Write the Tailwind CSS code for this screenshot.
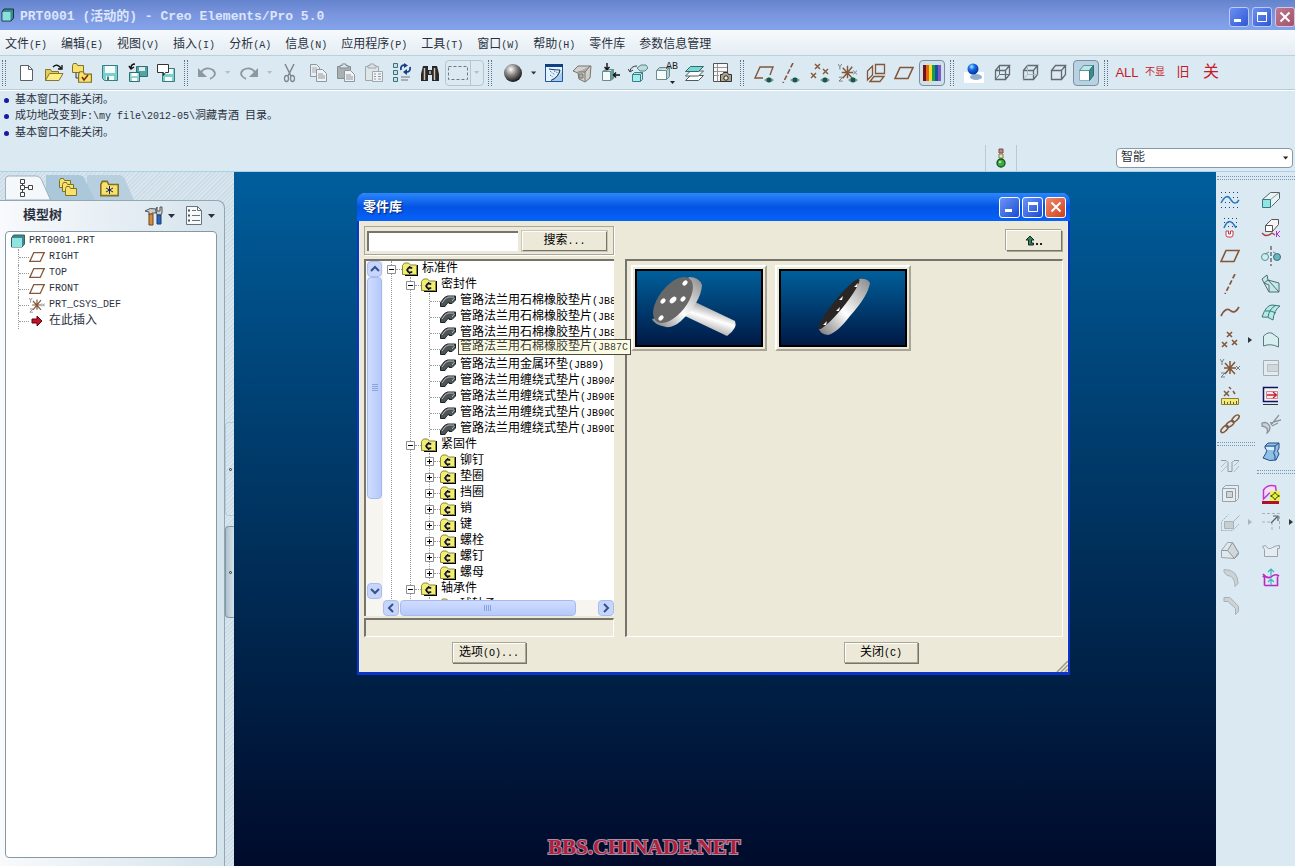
<!DOCTYPE html>
<html lang="zh-CN">
  <head>
    <meta charset="UTF-8" />
    <meta name="viewport" content="width=device-width, initial-scale=1.0" />
    <title>PRT0001 (活动的) - Creo Elements/Pro 5.0</title>
    <script src="https://cdn.jsdelivr.net/npm/@tailwindcss/browser@4"></script>
  </head>
  <body class="font-['Liberation_Mono','Noto_Sans_CJK_SC',monospace] text-xs">
    <!-- Shared icons -->
    <svg class="absolute h-0 w-0">
      <symbol id="caret" viewBox="0 0 8 4"><path d="M0 0h7L3.500 4z" fill="currentColor"></path></symbol>
      <symbol id="plane" viewBox="0 0 20 20"><path d="M6 4.500h13l-5 11H1z" fill="none" stroke="#83573a" stroke-width="1.600"></path></symbol>
      <symbol id="eye" viewBox="0 0 10 6"><path d="M0 3q5-5 10 0q-5 5-10 0z" fill="#7c9a92"></path><circle cx="5" cy="3" r="2.400" fill="#12594b"></circle></symbol>
      <symbol id="csys" viewBox="0 0 20 20">
        <path d="M4 10h12M10 3v13M5 5l10 11M15 4L5 16" fill="none" stroke="#83573a" stroke-width="1.500"></path>
        <path d="M0 1l2 3l2-3M2 4v3M16 8l4 4M20 8l-4 4M1 15h4l-4 4h4" fill="none" stroke="#777c85"></path>
      </symbol>
      <symbol id="folder" viewBox="0 0 16 14">
        <path d="M3 13.500h12.500V3" fill="none" stroke="#000" stroke-width="1.500"></path>
        <path d="M.500 12.500v-9l2-2.500h4l2 2h6v9.500z" fill="#f2ef70" stroke="#8a8738"></path>
        <path d="M10 6.500a2.500 2.500 0 1 0 0 3" fill="none" stroke="#10103a" stroke-width="1.800"></path>
        <path d="M7.500 4v2M7.500 10v2M4 8h2" stroke="#10103a"></path>
      </symbol>
      <symbol id="part" viewBox="0 0 16 14">
        <path d="M.500 8.500l4-5l3-1.500h8v4l-3.500 3.500H9V8L7 9.500l-2 3H.500z" fill="#4d5455" stroke="#1c2426"></path>
        <path d="M5 5l3-2h6M2 9l3-4M12 7l2.500-3" fill="none" stroke="#b4baba"></path>
      </symbol>
      <symbol id="cube" viewBox="0 0 20 20"><path d="M3.500 7.500h10v9h-10zM3.500 7.500l4-5h10l-4 5M17.500 2.500v9l-4 5" fill="none" stroke="#636b72" stroke-width="1.300"></path></symbol>
      <symbol id="minus" viewBox="0 0 9 9"><path d="M.500.500h8v8h-8z" fill="#fff" stroke="#8c9096"></path><path d="M2 4.500h5" stroke="#000"></path></symbol>
      <symbol id="plus" viewBox="0 0 9 9"><path d="M.500.500h8v8h-8z" fill="#fff" stroke="#8c9096"></path><path d="M2 4.500h5M4.500 2v5" stroke="#000"></path></symbol>
      <symbol id="yfolder" viewBox="0 0 12 10"><path d="M.500 9.500v-7l1-2h3l1 2h6v7z" fill="#f7e36b" stroke="#80702a"></path></symbol>
      <linearGradient id="sky" x1="0" y1="0" x2="0" y2="1"><stop stop-color="#00609c"></stop><stop offset="1" stop-color="#001844"></stop></linearGradient>
      <linearGradient id="steel" x1="0" y1="1" x2="1" y2="0"><stop stop-color="#777"></stop><stop offset=".45" stop-color="#fff"></stop><stop offset="1" stop-color="#888"></stop></linearGradient>
      <linearGradient id="shaft" x1=".7" y1=".2" x2=".4" y2=".85"><stop stop-color="#999"></stop><stop offset=".5" stop-color="#fff"></stop><stop offset="1" stop-color="#aaa"></stop></linearGradient>
      <radialGradient id="ball" cx=".38" cy=".3" r=".7"><stop stop-color="#fff"></stop><stop offset=".45" stop-color="#8b8987"></stop><stop offset="1" stop-color="#1b1918"></stop></radialGradient>
      <radialGradient id="blueball" cx=".38" cy=".3" r=".7"><stop stop-color="#bfe0ff"></stop><stop offset=".4" stop-color="#1270e8"></stop><stop offset="1" stop-color="#052fa0"></stop></radialGradient>
    </svg>

    <div class="flex min-h-screen flex-col bg-[#dbe9f2] text-[#2a3140]">
      <!-- Title bar -->
      <header class="flex h-[30px] shrink-0 items-center bg-linear-to-b from-[#6384cc] via-[#7b95df] to-[#82a4ea] pl-px">
        <svg class="h-3.5 w-3.5" viewBox="0 0 14 14"><path d="M1 4l2-3h9.500v9L10 13H1z" fill="#3c8c8e" stroke="#10383c"></path><path d="M1.500 4h8v8.500h-8z" fill="#8be0dd"></path></svg>
        <h1 class="ml-[5px] flex-1 truncate pt-1 text-[13px] font-bold text-[#dbe6fa]">PRT0001 (活动的) - Creo Elements/Pro 5.0</h1>
        <div class="flex gap-[3px] pt-[3px]">
          <button aria-label="最小化" class="flex h-5 w-5 items-center justify-center rounded-[3px] border border-[#b9ccf6] bg-linear-to-br from-[#6c8ff0] to-[#3057d4]"><svg class="h-3 w-3" viewBox="0 0 12 12"><path d="M1 8h7v3H1z" fill="#fff"></path></svg></button>
          <button aria-label="最大化" class="flex h-5 w-5 items-center justify-center rounded-[3px] border border-[#b9ccf6] bg-linear-to-br from-[#6c8ff0] to-[#3057d4]"><svg class="h-3 w-3" viewBox="0 0 12 12"><path d="M1.500 2v8.500h9V2z" fill="none" stroke="#fff"></path><path d="M1 1h10v3H1z" fill="#fff"></path></svg></button>
          <button aria-label="关闭窗口" class="flex h-5 w-5 items-center justify-center rounded-[3px] border border-[#d8c4dc] bg-linear-to-br from-[#bc7a95] to-[#a35268]"><svg class="h-3 w-3" viewBox="0 0 12 12"><path d="M1.500 1.500l9 9M10.500 1.500l-9 9" stroke="#fff" stroke-width="2"></path></svg></button>
        </div>
      </header>

      <!-- Menu bar -->
      <nav class="flex h-[26px] shrink-0 items-center gap-3.5 border-b border-[#bccfda] bg-linear-to-b from-[#f6fafd] to-[#e4edf3] pt-1 pl-[5px] whitespace-nowrap">
        <a href="#">文件<span class="text-[10px]">(F)</span></a>
        <a href="#">编辑<span class="text-[10px]">(E)</span></a>
        <a href="#">视图<span class="text-[10px]">(V)</span></a>
        <a href="#">插入<span class="text-[10px]">(I)</span></a>
        <a href="#">分析<span class="text-[10px]">(A)</span></a>
        <a href="#">信息<span class="text-[10px]">(N)</span></a>
        <a href="#">应用程序<span class="text-[10px]">(P)</span></a>
        <a href="#">工具<span class="text-[10px]">(T)</span></a>
        <a href="#">窗口<span class="text-[10px]">(W)</span></a>
        <a href="#">帮助<span class="text-[10px]">(H)</span></a>
        <a href="#">零件库</a>
        <a href="#">参数信息管理</a>
      </nav>

      <!-- Toolbar -->
      <div class="flex h-[34px] shrink-0 items-center overflow-hidden border-b border-[#b9cbd6] shadow-[0_1px_0_#fff]">
        <div class="flex w-3 shrink-0 pl-0.5"><span class="h-[26px] w-1 border-x border-dotted border-[#5a718c]"></span></div>
        <button aria-label="新建" class="flex h-7 w-7 shrink-0 items-center justify-center"><svg class="h-5 w-5" viewBox="0 0 20 20"><path d="M4.500 2.500h8l4 4v11h-12z" fill="#fff" stroke="#5c6064"></path><path d="M12.500 2.500v4h4" fill="none" stroke="#5c6064"></path></svg></button>
        <button aria-label="打开" class="flex h-7 w-7 shrink-0 items-center justify-center"><svg class="h-5 w-5" viewBox="0 0 20 20"><path d="M1.500 17.500v-11h5l1 2h7v3" fill="#e3cc55" stroke="#857531"></path><path d="M1.500 17.500l4-7H19l-4 7z" fill="#fbee86" stroke="#857531"></path><path d="M9 4q4-4 8 1M18 2v4h-4" fill="none" stroke="#111" stroke-width="1.300"></path></svg></button>
        <button aria-label="工作目录" class="flex h-7 w-7 shrink-0 items-center justify-center"><svg class="h-5 w-5" viewBox="0 0 20 20"><use href="#yfolder" x="0" y="0" width="12" height="10"></use><path d="M4 10v5h4" fill="none" stroke="#333"></path><use href="#yfolder" x="6" y="8" width="14" height="12"></use><path d="M10 14l2 3l4-5" fill="none" stroke="#7c2813" stroke-width="1.600"></path></svg></button>
        <button aria-label="保存" class="flex h-7 w-7 shrink-0 items-center justify-center"><svg class="h-5 w-5" viewBox="0 0 20 20"><path d="M2.500 2.500h15v15h-13l-2-2z" fill="#7ccfcd" stroke="#377d80"></path><path d="M5 3h10v7H5zM6 13h8v4H6z" fill="#f4fbfb"></path><path d="M7 13.500h2v4H7z" fill="#377d80"></path></svg></button>
        <button aria-label="保存副本" class="flex h-7 w-7 shrink-0 items-center justify-center"><svg class="h-5 w-5" viewBox="0 0 20 20"><path d="M8.500 3.500h11v10h-11z" fill="#53a3a4" stroke="#2f6f73"></path><path d="M11 4h6v4h-6z" fill="#d8eeee"></path><path d="M1.500 9.500h10v9h-10z" fill="#8fd5d2" stroke="#2f6f73"></path><path d="M3.500 10h6v3h-6zM4 15h5v3H4z" fill="#fff"></path><path d="M7 1Q3 1 3 5M1 3l2 3l3-2" fill="none" stroke="#111" stroke-width="1.500"></path></svg></button>
        <button aria-label="备份" class="flex h-7 w-7 shrink-0 items-center justify-center"><svg class="h-5 w-5" viewBox="0 0 20 20"><path d="M6.500 5.500h12v13h-12z" fill="#7ccfcd" stroke="#377d80"></path><path d="M9 6h8v5H9zM9 14h7v4H9z" fill="#f4fbfb"></path><path d="M1.500 1.500h11v8h-3l-2 3v-3h-6z" fill="#fff" stroke="#333"></path></svg></button>
        <div class="flex w-[13px] shrink-0 pl-1"><span class="h-[26px] w-1 border-x border-dotted border-[#5a718c]"></span></div>
        <button aria-label="撤消" class="flex h-7 w-7 shrink-0 items-center justify-center"><svg class="h-5 w-5" viewBox="0 0 20 20"><path d="M4 9q5-6 12-2q5 5-3 9" fill="none" stroke="#8f979d" stroke-width="1.800"></path><path d="M1 5v9h9z" fill="#8f979d"></path></svg></button>
        <button aria-label="撤消列表" class="flex h-7 w-3.5 shrink-0 items-center justify-center text-[#b4bfc7]"><svg class="h-[3px] w-1.5"><use href="#caret"></use></svg></button>
        <button aria-label="重做" class="flex h-7 w-7 shrink-0 items-center justify-center"><svg class="h-5 w-5" viewBox="0 0 20 20"><path d="M16 9q-5-6-12-2q-5 5 3 9" fill="none" stroke="#8f979d" stroke-width="1.800"></path><path d="M19 5v9h-9z" fill="#8f979d"></path></svg></button>
        <button aria-label="重做列表" class="flex h-7 w-[13px] shrink-0 items-center justify-center text-[#b4bfc7]"><svg class="h-[3px] w-1.5"><use href="#caret"></use></svg></button>
        <button aria-label="剪切" class="flex h-7 w-7 shrink-0 items-center justify-center"><svg class="h-5 w-5" viewBox="0 0 20 20"><path d="M5 1l6 12M14 1L8 13" fill="none" stroke="#7f878d" stroke-width="1.500"></path><ellipse cx="6.500" cy="15.500" rx="2" ry="3" fill="none" stroke="#7f878d" stroke-width="1.300"></ellipse><ellipse cx="12.500" cy="15.500" rx="2" ry="3" fill="none" stroke="#7f878d" stroke-width="1.300"></ellipse></svg></button>
        <button aria-label="复制" class="flex h-7 w-7 shrink-0 items-center justify-center"><svg class="h-5 w-5" viewBox="0 0 20 20"><path d="M2.500 1.500h6l3 3v9h-9z" fill="#e7edf0" stroke="#8f979d"></path><path d="M4 5h5M4 7h6M4 9h6" stroke="#a7aeb3"></path><path d="M8.500 6.500h6l4 4v8h-10z" fill="#eff3f5" stroke="#8f979d"></path><path d="M10 11h5M10 13h7M10 15h7" stroke="#8f979d"></path></svg></button>
        <button aria-label="粘贴" class="flex h-7 w-7 shrink-0 items-center justify-center"><svg class="h-5 w-5" viewBox="0 0 20 20"><path d="M1.500 3.500h13v12h-13z" fill="#a9b0b4" stroke="#858d93"></path><path d="M4 5V2.500h2V1h4v1.500h2V5z" fill="#dce2e5" stroke="#858d93"></path><path d="M8.500 7.500h6l4 4v7h-10z" fill="#eff3f5" stroke="#8f979d"></path><path d="M10 12h5M10 14h7M10 16h7" stroke="#8f979d"></path></svg></button>
        <button aria-label="选择性粘贴" class="flex h-7 w-7 shrink-0 items-center justify-center"><svg class="h-5 w-5" viewBox="0 0 20 20"><path d="M1.500 3.500h13v14h-13z" fill="#dfe6ea" stroke="#a0a8ae"></path><path d="M4 5V2.500h2V1h4v1.500h2V5z" fill="#dce2e5" stroke="#a0a8ae"></path><path d="M8.500 8.500h10v10h-10z" fill="#eff3f5" stroke="#a0a8ae"></path><path d="M10 11h2M14 11h3M10 13.500h2M14 13.500h3M10 16h2M14 16h3" stroke="#8f979d"></path></svg></button>
        <button aria-label="再生" class="flex h-7 w-7 shrink-0 items-center justify-center"><svg class="h-5 w-5" viewBox="0 0 20 20"><path d="M1.500.500h4v4h-4zM1.500 7.500h4v4h-4zM1.500 14.500h4v4h-4z" fill="#bfe4e6" stroke="#3f6e7c"></path><path d="M9 7q-1-5 4-5M18 4q1 5-4 5" fill="none" stroke="#183f80" stroke-width="1.800"></path><path d="M12 0l4 2.500L12 5zM15 6v6l-4-3z" fill="#183f80"></path><path d="M9 14h9M9 17h7" stroke="#6c747a"></path></svg></button>
        <button aria-label="查找" class="flex h-7 w-7 shrink-0 items-center justify-center"><svg class="h-5 w-5" viewBox="0 0 20 20"><path d="M3 3h5v4h4V3h5l2 8v7h-7v-6H8v6H1v-7z" fill="#2b2724"></path><path d="M4.500 5v12M14.500 5v12" stroke="#c9c0ba" stroke-width="1.500"></path><path d="M9 8h2v3H9z" fill="#999"></path></svg></button>
        <div class="ml-px flex h-[26px] w-[39px] shrink-0 rounded-sm border border-[#b7c5cf]">
          <button aria-label="框选" class="flex w-[26px] items-center justify-center border-r border-[#b7c5cf]"><svg class="h-4 w-5" viewBox="0 0 20 16"><path d="M.500 1.500h19v13H.500z" fill="none" stroke="#6f777d" stroke-dasharray="3 2"></path></svg></button>
          <button aria-label="框选列表" class="flex w-3 items-center justify-center text-[#b4bfc7]"><svg class="h-[3px] w-1.5"><use href="#caret"></use></svg></button>
        </div>
        <div class="flex w-[15px] shrink-0 pl-1"><span class="h-[26px] w-1 border-x border-dotted border-[#5a718c]"></span></div>
        <button aria-label="外观库" class="flex h-7 w-7 shrink-0 items-center justify-center"><svg class="h-5 w-5" viewBox="0 0 20 20"><circle cx="10" cy="10" r="9" fill="url(#ball)"></circle></svg></button>
        <button aria-label="外观列表" class="flex h-7 w-[13px] shrink-0 items-center justify-center text-[#333]"><svg class="h-1 w-1.5"><use href="#caret"></use></svg></button>
        <button aria-label="重画" class="flex h-7 w-7 shrink-0 items-center justify-center"><svg class="h-5 w-5" viewBox="0 0 20 20"><path d="M1.500 1.500h17v17h-17z" fill="#e4f3ff" stroke="#1f5598"></path><path d="M1 1h18v3H1z" fill="#103f84"></path><path d="M8 18q7-4 10-10v10z" fill="#a5cdef"></path><path d="M16 7Q15 14 7 17.500M5 6q5 1 11 1" fill="none" stroke="#1f3a62" stroke-width="1.200"></path><path d="M6 8l5 4M6 12l3 2M10 8l4 2" stroke="#2a65a8" stroke-dasharray="1 1"></path></svg></button>
        <button aria-label="视图方向" class="flex h-7 w-7 shrink-0 items-center justify-center"><svg class="h-5 w-5" viewBox="0 0 20 20"><path d="M1 8l5-5h13l-1 12-5 4-6-3-1-6z" fill="#d3d0cb" stroke="#77746f"></path><path d="M6 9h7l5-6M13 9v9M7 11h4v4H7z" fill="#b3b0ab" stroke="#77746f"></path></svg></button>
        <button aria-label="旋转中心" class="flex h-7 w-7 shrink-0 items-center justify-center"><svg class="h-5 w-5" viewBox="0 0 20 20"><path d="M2.500 8.500h8v9h-8z" fill="#f4fafa" stroke="#6b8b8d"></path><path d="M2.500 8.500l3-2h8l-3 2v9l3-2v-9" fill="#5aa59c" stroke="#6b8b8d"></path><path d="M7 0v6M4.500 4L7 6.500L9.500 4M20 12h-6M16 9.500L13.500 12l2.500 2.500" fill="none" stroke="#111" stroke-width="1.400"></path></svg></button>
        <button aria-label="重定向" class="flex h-7 w-7 shrink-0 items-center justify-center"><svg class="h-5 w-5" viewBox="0 0 20 20"><path d="M9 5l4-3h5l2 3-3 3h-5z" fill="#b9dddd" stroke="#5c8486"></path><path d="M4.500 11.500l2-2h8l-2 2v7h-8zM4.500 11.500h8M14.500 9.500v7l-2 2" fill="#a3edf0" stroke="#3c7f85"></path><path d="M9 3Q3 3 2 8M0 6l2 3l3-2" fill="none" stroke="#333"></path></svg></button>
        <button aria-label="已命名视图" class="flex h-7 w-7 shrink-0 items-center justify-center"><svg class="h-6 w-6" viewBox="0 0 24 24"><path d="M2.500 9.500h10v9h-10z" fill="#f6fbfc" stroke="#6b8b8d"></path><path d="M2.500 9.500l3-3h10l-3 3v9l3-3v-9" fill="#aad1d3" stroke="#6b8b8d"></path><path d="M16 20h5l-2.500 3z" fill="#222"></path><text x="12" y="8" font-size="10" fill="#222">AB</text></svg></button>
        <button aria-label="层" class="flex h-7 w-7 shrink-0 items-center justify-center"><svg class="h-5 w-5" viewBox="0 0 20 20"><path d="M1.500 17.500l5-5h13l-5 5z" fill="#fff" stroke="#4b5c60"></path><path d="M1.500 13l5-5h13l-5 5z" fill="#fff" stroke="#4b5c60"></path><path d="M1.500 8.500l5-5h13l-5 5z" fill="#78d8d3" stroke="#35686b"></path></svg></button>
        <button aria-label="视图管理器" class="flex h-7 w-7 shrink-0 items-center justify-center"><svg class="h-5 w-5" viewBox="0 0 20 20"><path d="M1.500.500h14v18h-14z" fill="#f8f8f8" stroke="#555"></path><path d="M5.500 1v17M2 4.500h13M2 8.500h13M2 12.500h5" stroke="#999"></path><path d="M8.500 11.500h2l1-2h4l1 2h3v7h-11z" fill="#aaa590" stroke="#333"></path><circle cx="14" cy="15" r="2.200" fill="#f0eedf" stroke="#222"></circle></svg></button>
        <div class="flex w-3.5 shrink-0 pl-1"><span class="h-[26px] w-1 border-x border-dotted border-[#5a718c]"></span></div>
        <button aria-label="平面显示" class="flex h-7 w-7 shrink-0 items-center justify-center"><svg class="h-5 w-5" viewBox="0 0 20 20"><path d="M9 15H1l5-11h13l-3 8" fill="none" stroke="#83573a" stroke-width="1.400"></path><use href="#eye" x="10" y="14" width="10" height="6"></use></svg></button>
        <button aria-label="轴显示" class="flex h-7 w-7 shrink-0 items-center justify-center"><svg class="h-5 w-5" viewBox="0 0 20 20"><path d="M11 0L1 20" fill="none" stroke="#83573a" stroke-width="1.600" stroke-dasharray="5 2"></path><use href="#eye" x="8" y="14" width="10" height="6"></use></svg></button>
        <button aria-label="点显示" class="flex h-7 w-7 shrink-0 items-center justify-center"><svg class="h-5 w-5" viewBox="0 0 20 20"><path d="M5 1l5 5M10 1L5 6M1 10l5 5M6 10l-5 5M13 6l5 5M18 6l-5 5" stroke="#83573a" stroke-width="1.400"></path><use href="#eye" x="10" y="14" width="10" height="6"></use></svg></button>
        <button aria-label="坐标系显示" class="flex h-7 w-7 shrink-0 items-center justify-center"><svg class="h-5 w-5" viewBox="0 0 20 20"><use href="#csys" width="19" height="19"></use><use href="#eye" x="10" y="14" width="10" height="6"></use></svg></button>
        <button aria-label="注释显示" class="flex h-7 w-7 shrink-0 items-center justify-center"><svg class="h-5 w-5" viewBox="0 0 20 20"><path d="M9.500 1.500h9v9h-9zM1.500 17V8l5-5v9zM4 18.500l4-5h10l-4 5z" fill="none" stroke="#83573a" stroke-width="1.300"></path></svg></button>
        <button aria-label="平面" class="flex h-7 w-7 shrink-0 items-center justify-center"><svg class="h-5 w-5"><use href="#plane"></use></svg></button>
        <button aria-label="颜色" class="mx-px flex h-[26px] w-[26px] shrink-0 items-center justify-center rounded-sm border border-[#7d8f9e] bg-[#d0e0eb]"><svg class="h-4 w-[18px]" viewBox="0 0 18 16"><path d="M0 0h3v16H0z" fill="#6d1512"></path><path d="M3 0h3v16H3z" fill="#e6621b"></path><path d="M6 0h3v16H6z" fill="#f6e21f"></path><path d="M9 0h3v16H9z" fill="#1d9c45"></path><path d="M12 0h3v16h-3z" fill="#174fa3"></path><path d="M15 0h3v16h-3z" fill="#7e57c8"></path></svg></button>
        <div class="flex w-3.5 shrink-0 pl-1"><span class="h-[26px] w-1 border-x border-dotted border-[#5a718c]"></span></div>
        <button aria-label="增强真实感" class="flex h-7 w-7 shrink-0 items-center justify-center"><svg class="h-5 w-5" viewBox="0 0 20 20"><path d="M0 9h20v11H0z" fill="#fff"></path><ellipse cx="12" cy="14" rx="6" ry="3" fill="#8fb0cc"></ellipse><circle cx="9" cy="6" r="5.500" fill="url(#blueball)"></circle></svg></button>
        <button aria-label="线框" class="flex h-7 w-7 shrink-0 items-center justify-center"><svg class="h-5 w-5" viewBox="0 0 20 20"><use href="#cube"></use><path d="M7.500 2.500v9h10M7.500 11.500l-4 5" fill="none" stroke="#636b72"></path></svg></button>
        <button aria-label="隐藏线" class="flex h-7 w-7 shrink-0 items-center justify-center"><svg class="h-5 w-5" viewBox="0 0 20 20"><use href="#cube"></use><path d="M7.500 2.500v9h10M7.500 11.500l-4 5" fill="none" stroke="#b0b8bd"></path></svg></button>
        <button aria-label="消隐" class="flex h-7 w-7 shrink-0 items-center justify-center"><svg class="h-5 w-5"><use href="#cube"></use></svg></button>
        <button aria-label="着色" class="mx-px flex h-[26px] w-[26px] shrink-0 items-center justify-center rounded-sm border border-[#7d8f9e] bg-[#b9d2e3]"><svg class="h-5 w-5" viewBox="0 0 20 20"><path d="M3.500 7.500h10v10h-10z" fill="#fff" stroke="#8eb3b8"></path><path d="M3.500 7.500l4-5h10l-4 5z" fill="#b8e8e9" stroke="#5c9599"></path><path d="M13.500 7.500l4-5v10l-4 5z" fill="#3d898b" stroke="#2c6f72"></path></svg></button>
        <div class="flex w-[13px] shrink-0 pl-1"><span class="h-[26px] w-1 border-x border-dotted border-[#5a718c]"></span></div>
        <button class="h-7 w-7 shrink-0 font-['Liberation_Sans',sans-serif] text-[13px] text-[#c61a28]">ALL</button>
        <button class="h-7 w-7 shrink-0 text-[10px] text-[#c61a28]">不显</button>
        <button class="h-7 w-7 shrink-0 text-[13px] text-[#c61a28]">旧</button>
        <button class="h-7 w-7 shrink-0 text-base text-[#c61a28]">关</button>
      </div>

      <!-- Messages and selection filter -->
      <div class="flex h-[82px] shrink-0 items-start justify-between border-b border-[#a8d2ea] pt-0.5">
        <ul class="pl-1 text-[11px] leading-4">
          <li class="flex items-center gap-1.5"><span class="h-[5px] w-[5px] rounded-full bg-[#1a1aa0]"></span>基本窗口不能关闭。</li>
          <li class="flex items-center gap-1.5"><span class="h-[5px] w-[5px] rounded-full bg-[#1a1aa0]"></span><span>成功地改变到<span class="text-[10px]">F:\my file\2012-05\</span>洞藏青酒<span class="text-[10px]">&nbsp;</span>目录。</span></li>
          <li class="flex items-center gap-1.5"><span class="h-[5px] w-[5px] rounded-full bg-[#1a1aa0]"></span>基本窗口不能关闭。</li>
        </ul>
        <div class="flex items-center self-end pr-0.5">
          <div class="mr-[99px] flex h-[26px] w-8 items-center justify-center border-x border-[#b8cad6]">
            <svg class="h-5 w-3" viewBox="0 0 12 20"><path d="M4 1h4v4H4z" fill="#b58a80" stroke="#7a4d45"></path><path d="M4 6h4v4H4z" fill="#dfe8bd" stroke="#80813d"></path><circle cx="6" cy="15" r="4" fill="#3cab45" stroke="#15521a" stroke-width="1.300"></circle><circle cx="5" cy="14" r="1.300" fill="#a9e5a6"></circle></svg>
          </div>
          <div class="relative">
            <select aria-label="选择过滤器" class="h-5 w-[177px] appearance-none rounded-sm border border-[#8698a5] bg-white pl-1 text-xs">
              <option>智能</option>
            </select>
            <svg class="pointer-events-none absolute top-2 right-1 h-1 w-1.5 text-[#222]"><use href="#caret"></use></svg>
          </div>
        </div>
      </div>

      <main class="flex flex-1">
        <!-- Model tree panel -->
        <aside class="flex w-[234px] shrink-0 flex-col bg-[repeating-linear-gradient(135deg,#dae7ef_0px,#dae7ef_1px,#cbdce7_2px,#cbdce7_3px)]">
          <div class="flex h-7 items-end">
            <svg class="h-[25px] w-[135px]" viewBox="0 0 135 25">
              <path d="M87 25V0h32q5 0 7 7l8 18z" fill="#b7cfde"></path><path d="M46 25V0h33q5 0 7 7l9 18z" fill="#abc8da"></path>
              <path d="M5.500 25V4q0-3 3-3h27q5 0 7 6l8 18z" fill="#f4f8fb" stroke="#9eb1bf"></path>
              <path d="M20.500 4.500h4v4h-4zM20.500 10.500h4v4h-4zM20.500 17.500h4v4h-4zM28.500 10.500h4v4h-4zM22.500 9v2M22.500 15v2M25 12.500h3" fill="#fff" stroke="#444"></path>
              <use href="#yfolder" x="59" y="3" width="12" height="10"></use><use href="#yfolder" x="62" y="7" width="12" height="10"></use><use href="#yfolder" x="65" y="11" width="12" height="10"></use>
              <use href="#yfolder" x="100" y="5" width="19" height="17"></use><path d="M109.500 11v8M106 13l7 4M113 13l-7 4" stroke="#1a2864"></path>
            </svg>
          </div>
          <div class="flex flex-1">
            <div class="flex flex-1 flex-col rounded-tr-lg border-t border-r border-[#93a6b4] bg-linear-to-r from-[#f8fafc] to-[#d5e3ec] pb-2 pl-[5px] pr-[7px]">
              <div class="flex h-[30px] items-center">
                <h2 class="ml-[18px] flex-1 text-[13px] font-bold">模型树</h2>
                <button aria-label="设置" class="flex items-center gap-1">
                  <svg class="h-5 w-5" viewBox="0 0 20 20"><path d="M1 5q5-4 11-2v4H8v2H5V6z" fill="#c9cdd1" stroke="#555"></path><path d="M5 8h4v11H5z" fill="#d88a3e" stroke="#6e4520"></path><path d="M13 1v4h3V1h2v6l-1 2h-4l-1-5z" fill="#c9cdd1" stroke="#555"></path><path d="M13 9h4v9h-4z" fill="#2c62b4" stroke="#173c74"></path></svg>
                  <svg class="h-1 w-2"><use href="#caret"></use></svg>
                </button>
                <button aria-label="显示" class="mr-px ml-2 flex items-center gap-1">
                  <svg class="h-5 w-5" viewBox="0 0 20 20"><path d="M2.500.500h11l4 4v14h-15z" fill="#f7f9fb" stroke="#67737c"></path><path d="M13.500.500v4h4M8 4.500h4M8 9.500h8M8 14.500h8" fill="none" stroke="#67737c"></path><path d="M4 3.500h2v2H4zM4 8.500h2v2H4zM4 13.500h2v2H4z" fill="#455"></path></svg>
                  <svg class="h-1 w-2"><use href="#caret"></use></svg>
                </button>
              </div>
              <div class="flex-1 rounded-sm border border-[#8598a6] bg-white pt-px pl-[5px] text-[10px] leading-4">
                <div class="flex items-center gap-1"><svg class="h-3.5 w-3.5" viewBox="0 0 14 14"><path d="M.500 4l2-3h11v9L11 13H.500z" fill="#43868b" stroke="#2f656a"></path><path d="M1 4h10v9H1z" fill="#90e4e1"></path></svg>PRT0001.PRT</div>
                <ul class="ml-[7px]">
                  <li class="flex items-center border-l border-dotted border-[#999]"><span class="w-2.5 border-t border-dotted border-[#999]"></span><svg class="mr-1 h-4 w-4"><use href="#plane"></use></svg>RIGHT</li>
                  <li class="flex items-center border-l border-dotted border-[#999]"><span class="w-2.5 border-t border-dotted border-[#999]"></span><svg class="mr-1 h-4 w-4"><use href="#plane"></use></svg>TOP</li>
                  <li class="flex items-center border-l border-dotted border-[#999]"><span class="w-2.5 border-t border-dotted border-[#999]"></span><svg class="mr-1 h-4 w-4"><use href="#plane"></use></svg>FRONT</li>
                  <li class="flex items-center border-l border-dotted border-[#999]"><span class="w-2.5 border-t border-dotted border-[#999]"></span><svg class="mr-1 h-4 w-4"><use href="#csys"></use></svg>PRT_CSYS_DEF</li>
                  <li class="flex items-center border-l border-dotted border-[#999] text-xs leading-4"><span class="w-2.5 border-t border-dotted border-[#999]"></span><svg class="mr-1 h-4 w-4" viewBox="0 0 16 16"><path d="M3 6h5V3l5 5l-5 5v-3H3z" fill="#c31425" stroke="#5d0711"></path></svg>在此插入</li>
                </ul>
              </div>
            </div>
            <div class="flex w-[9px] flex-col gap-2.5 pt-[222px]">
              <button aria-label="展开导航器" class="flex h-[94px] items-center justify-center rounded-l-sm border border-r-0 border-[#b7cad8]"><span class="h-[3px] w-[3px] rounded-full border border-[#333]"></span></button>
              <button aria-label="折叠导航器" class="flex h-[92px] items-center justify-center rounded-l-sm border border-r-0 border-[#8297a6] bg-linear-to-r from-[#b0c2cf] to-[#d3e1ea]"><span class="h-[3px] w-[3px] rounded-full border border-[#333]"></span></button>
            </div>
          </div>
        </aside>

        <!-- Graphics window -->
        <section class="relative flex-1 bg-linear-to-b from-[#005e9d] via-[#00335f] to-[#000b2b]">
          <div class="absolute top-[21px] left-[123px] flex w-[713px] flex-col rounded-t-lg border-x-2 border-b-[3px] border-[#0a35c8] bg-[#ece9d8] text-black">
            <div class="-mx-0.5 flex h-7 items-center rounded-t-lg bg-linear-to-b from-[#2c86fb] via-[#0453e4] to-[#0563fb] pr-1 pl-1.5">
              <h2 class="flex-1 pt-px text-[13px] font-bold text-white text-shadow-[1px_1px_1px_#0a246a]">零件库</h2>
              <div class="flex gap-0.5">
                <button aria-label="最小化对话框" class="flex h-[21px] w-[21px] items-center justify-center rounded-[3px] border border-white bg-linear-to-br from-[#6d95f5] to-[#1b48d4]"><svg class="h-3 w-3" viewBox="0 0 12 12"><path d="M1 8h7v3H1z" fill="#fff"></path></svg></button>
                <button aria-label="最大化对话框" class="flex h-[21px] w-[21px] items-center justify-center rounded-[3px] border border-white bg-linear-to-br from-[#6d95f5] to-[#1b48d4]"><svg class="h-3 w-3" viewBox="0 0 12 12"><path d="M1.500 2v8.500h9V2z" fill="none" stroke="#fff"></path><path d="M1 1h10v3H1z" fill="#fff"></path></svg></button>
                <button aria-label="关闭对话框" class="flex h-[21px] w-[21px] items-center justify-center rounded-[3px] border border-white bg-linear-to-br from-[#ee8a6c] to-[#cf3c14]"><svg class="h-3 w-3" viewBox="0 0 12 12"><path d="M1.500 1.500l9 9M10.500 1.500l-9 9" stroke="#fff" stroke-width="2"></path></svg></button>
              </div>
            </div>

            <div class="flex gap-[11px] border-x border-[#f2f0e6] px-1 pt-[5px] pb-[9px]">
              <div class="relative flex w-[250px] shrink-0 flex-col">
                <div class="flex h-[29px] items-center gap-1 border border-[#a9a698] px-0.5 shadow-[1px_1px_0_#fff]">
                  <input type="text" aria-label="搜索零件" class="h-5 min-w-0 flex-1 border-t-2 border-l-2 border-[#77756b] bg-white px-1 outline-none" />
                  <button class="mr-1 h-5 w-[85px] border border-t-white border-r-[#77756b] border-b-[#77756b] border-l-white shadow-[1px_1px_0_#a9a698] outline outline-[#c9c6b8]">搜索<span class="text-[10px]">...</span></button>
                </div>

                <div class="mt-1 flex h-[357px] border-t-2 border-l-2 border-[#77756b] bg-white">
                  <!-- Vertical scroll bar -->
                  <div class="flex w-[17px] shrink-0 flex-col bg-[#f6f5f0] px-px">
                    <button aria-label="向上滚动" class="flex h-4 items-center justify-center rounded-sm border border-[#a9bdf0] bg-[#c6d5fb]"><svg class="h-2 w-2.5" viewBox="0 0 10 8"><path d="M1 6l4-4l4 4" fill="none" stroke="#39518b" stroke-width="2"></path></svg></button>
                    <div class="flex h-[222px] items-center justify-center rounded-sm border border-[#a5bbef] bg-linear-to-r from-[#cfdcff] to-[#b5c9fa]"><svg class="h-2 w-1.5" viewBox="0 0 6 8"><path d="M0 .500h6M0 2.500h6M0 4.500h6M0 6.500h6" stroke="#8ba3dc"></path></svg></div>
                    <div class="flex-1"></div>
                    <button aria-label="向下滚动" class="mb-[17px] flex h-4 items-center justify-center rounded-sm border border-[#a9bdf0] bg-[#c6d5fb]"><svg class="h-2 w-2.5" viewBox="0 0 10 8"><path d="M1 2l4 4l4-4" fill="none" stroke="#39518b" stroke-width="2"></path></svg></button>
                  </div>
                  <div class="flex min-w-0 flex-1 flex-col">
                    <div class="h-[339px] overflow-hidden whitespace-nowrap">
                      <ul class="ml-2 border-l border-dotted border-[#999]">
                        <li>
                          <div class="flex h-4 items-center"><svg class="-ml-[5px] h-[9px] w-[9px]"><use href="#minus"></use></svg><span class="w-1.5 border-t border-dotted border-[#999]"></span><svg class="mr-1 h-3.5 w-4"><use href="#folder"></use></svg>标准件</div>
                          <ul class="ml-[18px] border-l border-dotted border-[#999]">
                            <li>
                              <div class="flex h-4 items-center"><svg class="-ml-[5px] h-[9px] w-[9px]"><use href="#minus"></use></svg><span class="w-1.5 border-t border-dotted border-[#999]"></span><svg class="mr-1 h-3.5 w-4"><use href="#folder"></use></svg>密封件</div>
                              <ul class="ml-[18px] border-l border-dotted border-[#999]">
                                <li class="flex h-4 items-center"><span class="w-2.5 shrink-0 border-t border-dotted border-[#999]"></span><svg class="mr-1 h-3.5 w-4 shrink-0"><use href="#part"></use></svg><span>管路法兰用石棉橡胶垫片<span class="text-[10px]">(JB87A)</span></span></li>
                                <li class="flex h-4 items-center"><span class="w-2.5 shrink-0 border-t border-dotted border-[#999]"></span><svg class="mr-1 h-3.5 w-4 shrink-0"><use href="#part"></use></svg><span>管路法兰用石棉橡胶垫片<span class="text-[10px]">(JB87B)</span></span></li>
                                <li class="flex h-4 items-center"><span class="w-2.5 shrink-0 border-t border-dotted border-[#999]"></span><svg class="mr-1 h-3.5 w-4 shrink-0"><use href="#part"></use></svg><span>管路法兰用石棉橡胶垫片<span class="text-[10px]">(JB87C)</span></span></li>
                                <li class="flex h-4 items-center"><span class="w-2.5 shrink-0 border-t border-dotted border-[#999]"></span><svg class="mr-1 h-3.5 w-4 shrink-0"><use href="#part"></use></svg></li>
                                <li class="flex h-4 items-center"><span class="w-2.5 shrink-0 border-t border-dotted border-[#999]"></span><svg class="mr-1 h-3.5 w-4 shrink-0"><use href="#part"></use></svg><span>管路法兰用金属环垫<span class="text-[10px]">(JB89)</span></span></li>
                                <li class="flex h-4 items-center"><span class="w-2.5 shrink-0 border-t border-dotted border-[#999]"></span><svg class="mr-1 h-3.5 w-4 shrink-0"><use href="#part"></use></svg><span>管路法兰用缠绕式垫片<span class="text-[10px]">(JB90A)</span></span></li>
                                <li class="flex h-4 items-center"><span class="w-2.5 shrink-0 border-t border-dotted border-[#999]"></span><svg class="mr-1 h-3.5 w-4 shrink-0"><use href="#part"></use></svg><span>管路法兰用缠绕式垫片<span class="text-[10px]">(JB90B)</span></span></li>
                                <li class="flex h-4 items-center"><span class="w-2.5 shrink-0 border-t border-dotted border-[#999]"></span><svg class="mr-1 h-3.5 w-4 shrink-0"><use href="#part"></use></svg><span>管路法兰用缠绕式垫片<span class="text-[10px]">(JB90C)</span></span></li>
                                <li class="flex h-4 items-center"><span class="w-2.5 shrink-0 border-t border-dotted border-[#999]"></span><svg class="mr-1 h-3.5 w-4 shrink-0"><use href="#part"></use></svg><span>管路法兰用缠绕式垫片<span class="text-[10px]">(JB90D)</span></span></li>
                              </ul>
                            </li>
                            <li>
                              <div class="flex h-4 items-center"><svg class="-ml-[5px] h-[9px] w-[9px]"><use href="#minus"></use></svg><span class="w-1.5 border-t border-dotted border-[#999]"></span><svg class="mr-1 h-3.5 w-4"><use href="#folder"></use></svg>紧固件</div>
                              <ul class="ml-[18px] border-l border-dotted border-[#999]">
                                <li class="flex h-4 items-center"><svg class="-ml-[5px] h-[9px] w-[9px]"><use href="#plus"></use></svg><span class="w-1.5 border-t border-dotted border-[#999]"></span><svg class="mr-1 h-3.5 w-4"><use href="#folder"></use></svg>铆钉</li>
                                <li class="flex h-4 items-center"><svg class="-ml-[5px] h-[9px] w-[9px]"><use href="#plus"></use></svg><span class="w-1.5 border-t border-dotted border-[#999]"></span><svg class="mr-1 h-3.5 w-4"><use href="#folder"></use></svg>垫圈</li>
                                <li class="flex h-4 items-center"><svg class="-ml-[5px] h-[9px] w-[9px]"><use href="#plus"></use></svg><span class="w-1.5 border-t border-dotted border-[#999]"></span><svg class="mr-1 h-3.5 w-4"><use href="#folder"></use></svg>挡圈</li>
                                <li class="flex h-4 items-center"><svg class="-ml-[5px] h-[9px] w-[9px]"><use href="#plus"></use></svg><span class="w-1.5 border-t border-dotted border-[#999]"></span><svg class="mr-1 h-3.5 w-4"><use href="#folder"></use></svg>销</li>
                                <li class="flex h-4 items-center"><svg class="-ml-[5px] h-[9px] w-[9px]"><use href="#plus"></use></svg><span class="w-1.5 border-t border-dotted border-[#999]"></span><svg class="mr-1 h-3.5 w-4"><use href="#folder"></use></svg>键</li>
                                <li class="flex h-4 items-center"><svg class="-ml-[5px] h-[9px] w-[9px]"><use href="#plus"></use></svg><span class="w-1.5 border-t border-dotted border-[#999]"></span><svg class="mr-1 h-3.5 w-4"><use href="#folder"></use></svg>螺栓</li>
                                <li class="flex h-4 items-center"><svg class="-ml-[5px] h-[9px] w-[9px]"><use href="#plus"></use></svg><span class="w-1.5 border-t border-dotted border-[#999]"></span><svg class="mr-1 h-3.5 w-4"><use href="#folder"></use></svg>螺钉</li>
                                <li class="flex h-4 items-center"><svg class="-ml-[5px] h-[9px] w-[9px]"><use href="#plus"></use></svg><span class="w-1.5 border-t border-dotted border-[#999]"></span><svg class="mr-1 h-3.5 w-4"><use href="#folder"></use></svg>螺母</li>
                              </ul>
                            </li>
                            <li>
                              <div class="flex h-4 items-center"><svg class="-ml-[5px] h-[9px] w-[9px]"><use href="#minus"></use></svg><span class="w-1.5 border-t border-dotted border-[#999]"></span><svg class="mr-1 h-3.5 w-4"><use href="#folder"></use></svg>轴承件</div>
                              <ul class="ml-[18px] border-l border-dotted border-[#999]">
                                <li class="flex h-4 items-center"><span class="w-2.5 border-t border-dotted border-[#999]"></span><svg class="mr-1 h-3.5 w-4"><use href="#folder"></use></svg>球轴承</li>
                              </ul>
                            </li>
                          </ul>
                        </li>
                      </ul>
                    </div>
                    <!-- Horizontal scroll bar -->
                    <div class="flex h-4 bg-[#f6f5f0]">
                      <button aria-label="向左滚动" class="flex w-4 items-center justify-center rounded-sm border border-[#a9bdf0] bg-[#c6d5fb]"><svg class="h-2.5 w-2" viewBox="0 0 8 10"><path d="M6 1L2 5l4 4" fill="none" stroke="#39518b" stroke-width="2"></path></svg></button>
                      <div class="ml-px flex w-[176px] items-center justify-center rounded-sm border border-[#a5bbef] bg-linear-to-b from-[#cfdcff] to-[#b5c9fa]"><svg class="h-1.5 w-2" viewBox="0 0 8 6"><path d="M.500 0v6M2.500 0v6M4.500 0v6M6.500 0v6" stroke="#8ba3dc"></path></svg></div>
                      <div class="flex-1"></div>
                      <button aria-label="向右滚动" class="flex w-4 items-center justify-center rounded-sm border border-[#a9bdf0] bg-[#c6d5fb]"><svg class="h-2.5 w-2" viewBox="0 0 8 10"><path d="M2 1l4 4l-4 4" fill="none" stroke="#39518b" stroke-width="2"></path></svg></button>
                    </div>
                  </div>
                </div>

                <div class="mt-0.5 h-[19px] border-t-2 border-r border-b border-l-2 border-t-[#77756b] border-r-white border-b-white border-l-[#77756b]"></div>
                <button class="mt-[5px] h-[21px] w-[74px] self-center border border-[#a9a698] bg-[#ece9d8] shadow-[inset_1px_1px_0_#fff,1px_1px_0_#77756b]">选项<span class="text-[10px]">(O)...</span></button>

                <div role="tooltip" class="absolute top-[113px] left-[94px] h-4 border border-black/70 bg-[#fbfbe4] pr-0.5 pl-px leading-[14px] whitespace-nowrap text-black/80">管路法兰用石棉橡胶垫片<span class="text-[10px]">(JB87C</span></div>
              </div>

              <div class="flex min-w-0 flex-1 flex-col">
                <button aria-label="上一级" class="mt-1 mr-px flex h-[21px] w-14 items-center justify-center self-end border border-t-white border-r-[#77756b] border-b-[#77756b] border-l-white shadow-[1px_1px_0_#a9a698,-1px_-1px_0_#a9a698]"><svg class="h-3 w-[18px]" viewBox="0 0 18 12"><path d="M5 1L1 5h2.500v5h5V8H6.500V5H9z" fill="#397d5f" stroke="#0f2e20"></path><path d="M11 8h2v2h-2zM15 8h2v2h-2z" fill="#222"></path></svg></button>
                <div class="mt-2 flex flex-1 items-start gap-2 border-t-2 border-r border-b border-l-2 border-t-[#77756b] border-r-white border-b-white border-l-[#77756b] pt-1 pl-1">
                  <button aria-label="法兰零件" class="border-2 border-t-white border-r-[#a9a698] border-b-[#a9a698] border-l-white p-0.5">
                    <svg class="h-[78px] w-[128px]" viewBox="0 0 128 78">
                      <path d="M1 1h126v76H1z" fill="url(#sky)" stroke="#000" stroke-width="2"></path>
                      <path d="M58 32L100 52q3 7-8 15L50 47z" fill="url(#shaft)"></path>
                      <path d="M54 8q10 0 13 8q-1 17-21 36q-8 7-15 6q-13-3-14-8l8-2z" fill="url(#steel)"></path>
                      <ellipse cx="38" cy="31" rx="14" ry="27" transform="rotate(38 38 31)" fill="#686868"></ellipse>
                      <g fill="#fff"><ellipse cx="50" cy="14" rx="2" ry="3" transform="rotate(45 50 14)"></ellipse><ellipse cx="38" cy="31" rx="2.500" ry="4" transform="rotate(45 38 31)"></ellipse><ellipse cx="28" cy="32" rx="2" ry="3" transform="rotate(45 28 32)"></ellipse><ellipse cx="48" cy="30" rx="2" ry="3" transform="rotate(45 48 30)"></ellipse><ellipse cx="26" cy="49" rx="2" ry="3" transform="rotate(45 26 49)"></ellipse></g>
                    </svg>
                  </button>
                  <button aria-label="垫片零件" class="border-2 border-t-white border-r-[#a9a698] border-b-[#a9a698] border-l-white p-0.5">
                    <svg class="h-[78px] w-[128px]" viewBox="0 0 128 78">
                      <path d="M1 1h126v76H1z" fill="url(#sky)" stroke="#000" stroke-width="2"></path>
                      <path d="M80 10q8-1 11 4q-2 13-20 33Q58 64 49 66q-8-1-9-6l12-14z" fill="url(#steel)"></path>
                      <ellipse cx="60" cy="35" rx="5" ry="32" transform="rotate(39 60 35)" fill="#292625"></ellipse>
                      <g fill="#fff"><path d="M75 18l4-4l-1 4zM60 31l4-4l-1 4zM57 42l4-4l-1 4zM44 56l4-4l-1 4z"></path></g>
                    </svg>
                  </button>
                </div>
                <button class="mt-[5px] mr-[145px] h-[21px] w-[74px] self-end border border-[#a9a698] bg-[#ece9d8] shadow-[inset_1px_1px_0_#fff,1px_1px_0_#77756b]">关闭<span class="text-[10px]">(C)</span></button>
              </div>
            </div>
            <svg class="absolute right-0 bottom-0 h-3 w-3" viewBox="0 0 12 12"><path d="M1 12L12 1M5 12l7-7M9 12l3-3" stroke="#9c998b" stroke-width="1.500"></path></svg>
          </div>

          <p class="absolute bottom-[3px] left-[314px] font-['Liberation_Serif',serif] text-[21px] leading-8 font-bold text-[#b0203a] [-webkit-text-stroke:2px_#a88fa8] [paint-order:stroke_fill]">BBS.CHINADE.NET</p>
        </section>

        <!-- Feature toolbars -->
        <aside class="w-[79px] shrink-0">
          <div class="flex h-3.5 items-start pt-1 pl-px"><span class="h-1 w-full border-y border-dotted border-[#7896b4]"></span></div>
          <div class="flex items-start">
            <div class="flex w-[41px] flex-col">
              <button aria-label="草绘" class="flex h-7 w-7 items-center justify-center"><svg class="h-5 w-5" viewBox="0 0 20 20"><path d="M1 2.500h18M1 7.500h18M1 12.500h18M1 17.500h18" stroke="#1c3f78" stroke-dasharray="1 3"></path><path d="M1 13q6-11 10-3q4 6 8 0" fill="none" stroke="#2a79bd" stroke-width="1.500"></path></svg></button>
              <button aria-label="修饰草绘" class="flex h-7 w-7 items-center justify-center"><svg class="h-5 w-5" viewBox="0 0 20 20"><path d="M4 .500h14M4 4.500h14M4 8.500h14" stroke="#1c3f78" stroke-dasharray="1 3"></path><path d="M4 10q5-13 12 0" fill="none" stroke="#2a79bd" stroke-width="1.500"></path><path d="M6 13v4q0 2 2 2h3q2 0 2-2v-4h-2.500v3h-2v-3z" fill="#fff" stroke="#c43b4b"></path></svg></button>
              <button aria-label="基准平面" class="flex h-7 w-7 items-center justify-center"><svg class="h-5 w-5"><use href="#plane"></use></svg></button>
              <button aria-label="基准轴" class="flex h-7 w-7 items-center justify-center"><svg class="h-5 w-5" viewBox="0 0 20 20"><path d="M15 0L5 20" fill="none" stroke="#83573a" stroke-width="1.700" stroke-dasharray="5 2"></path></svg></button>
              <button aria-label="基准曲线" class="flex h-7 w-7 items-center justify-center"><svg class="h-5 w-5" viewBox="0 0 20 20"><path d="M1 14Q6 4 11 9q4 3 8-4" fill="none" stroke="#83573a" stroke-width="1.700"></path></svg></button>
              <div class="flex h-7 items-center">
                <button aria-label="基准点" class="flex h-7 w-7 items-center justify-center"><svg class="h-5 w-5" viewBox="0 0 20 20"><path d="M7 2l5 5M12 2L7 7M2 12l5 5M7 12l-5 5M12 10l5 5M17 10l-5 5" stroke="#83573a" stroke-width="1.600"></path></svg></button>
                <svg class="ml-1 h-1.5 w-1" viewBox="0 0 4 6"><path d="M0 0v6l4-3z" fill="#333"></path></svg>
              </div>
              <button aria-label="坐标系" class="flex h-7 w-7 items-center justify-center"><svg class="h-5 w-5"><use href="#csys"></use></svg></button>
              <button aria-label="分析特征" class="flex h-7 w-7 items-center justify-center"><svg class="h-5 w-5" viewBox="0 0 20 20"><path d="M4 5l5 5M9 5l-5 5M9 1l2 2M13 5l2 3" stroke="#83573a" stroke-width="1.500"></path><path d="M1.500 12.500h17v6h-17z" fill="#f5ea79" stroke="#8d8032"></path><path d="M4.500 15v3M7.500 16v2M10.500 15v3M13.500 16v2M16.500 15v3" stroke="#6b6020"></path></svg></button>
              <button aria-label="参考" class="flex h-7 w-7 items-center justify-center"><svg class="h-5 w-5" viewBox="0 0 20 20"><g fill="none" stroke="#83573a" stroke-width="1.600"><ellipse cx="4.500" cy="15" rx="2.200" ry="4.500" transform="rotate(45 4.500 15)"></ellipse><ellipse cx="10" cy="10" rx="2.200" ry="4.500" transform="rotate(55 10 10)"></ellipse><ellipse cx="15.500" cy="4.500" rx="2.200" ry="4.500" transform="rotate(45 15.500 4.500)"></ellipse></g></svg></button>
              <div class="flex h-3.5 items-start pt-1 pl-px"><span class="h-1 w-[38px] border-y border-dotted border-[#7896b4]"></span></div>
              <button aria-label="孔" class="flex h-7 w-7 items-center justify-center"><svg class="h-5 w-5" viewBox="0 0 20 20"><path d="M1 4.500h5l2 2v9h4v-9l2-2h5" fill="none" stroke="#8f999f"></path><path d="M1 11l5-5M1 16l6-6M14 16l5-6M14 10l5-5" stroke="#b4bdc3"></path></svg></button>
              <button aria-label="壳" class="flex h-7 w-7 items-center justify-center"><svg class="h-5 w-5" viewBox="0 0 20 20"><path d="M2.500 4.500h13v13h-13zM2.500 4.500l3-3h13v13l-3 3" fill="#e6ecef" stroke="#99a3aa"></path><path d="M6.500 7.500h6v6h-6z" fill="#cfd6da" stroke="#8d979e"></path></svg></button>
              <div class="flex h-7 items-center">
                <button aria-label="筋" class="flex h-7 w-7 items-center justify-center"><svg class="h-5 w-5" viewBox="0 0 20 20"><path d="M1.500 9.500l7-7M1.500 18.500v-9M1.500 18.500h11l7-7" fill="none" stroke="#a7b1b8" stroke-dasharray="2 1"></path><path d="M4.500 9.500h9v7h-9zM13.500 9.500l6-6" fill="#c7ced2" stroke="#a7b1b8"></path></svg></button>
                <svg class="ml-1 h-1.5 w-1" viewBox="0 0 4 6"><path d="M0 0v6l4-3z" fill="#a9b4bc"></path></svg>
              </div>
              <button aria-label="拔模" class="flex h-7 w-7 items-center justify-center"><svg class="h-5 w-5" viewBox="0 0 20 20"><path d="M1.500 17.500v-7l6-8h5l6 10v2l-4 4z" fill="#e1e7ea" stroke="#99a3aa"></path><path d="M7.500 10.500l5-8l6 10l-4 6zM1.500 10.500h6" fill="#d0d8dc" stroke="#8d979e"></path></svg></button>
              <button aria-label="倒圆角" class="flex h-7 w-7 items-center justify-center"><svg class="h-5 w-5" viewBox="0 0 20 20"><path d="M4 1.500q14 0 14 14l-3 3q0-11-8-11L4 4z" fill="#ccd3d7" stroke="#a7b1b8"></path></svg></button>
              <button aria-label="倒角" class="flex h-7 w-7 items-center justify-center"><svg class="h-5 w-5" viewBox="0 0 20 20"><path d="M4 1.500h6l8.500 9v5l-3 3v-6L8 5.500H4z" fill="#ccd3d7" stroke="#a7b1b8"></path></svg></button>
            </div>
            <div class="flex flex-1 flex-col">
              <button aria-label="拉伸" class="flex h-7 w-7 items-center justify-center"><svg class="h-5 w-5" viewBox="0 0 20 20"><path d="M1.500 9.500l8-7h9v6l-8 8" fill="#e9f3f5" stroke="#566"></path><path d="M9.500 9.500l9-7" stroke="#8a9a9c"></path><path d="M1.500 9.500h8v8h-8z" fill="#8fe5e3" stroke="#37797c"></path></svg></button>
              <button aria-label="旋转" class="flex h-7 w-7 items-center justify-center"><svg class="h-5 w-5" viewBox="0 0 20 20"><path d="M4.500 7.500l6-6h7v5l-6 7z" fill="#f5f5f5" stroke="#555"></path><path d="M4.500 7.500h7v6h-7z" fill="#fff" stroke="#555"></path><path d="M1 15q4 5 10 0l3 2" fill="none" stroke="#b04141" stroke-width="1.400"></path><path d="M15.500 13v6M19 13l-3 3l3 3" fill="none" stroke="#b52dc2"></path></svg></button>
              <button aria-label="镜像" class="flex h-7 w-7 items-center justify-center"><svg class="h-5 w-5" viewBox="0 0 20 20"><path d="M10 0v20" stroke="#333" stroke-dasharray="4 2"></path><circle cx="4" cy="11" r="3.500" fill="#c9f0f1" stroke="#5e8f97"></circle><circle cx="16" cy="11" r="3.500" fill="#66b8bd" stroke="#37707a"></circle><path d="M4 8l4-2M16 8l-4-2" stroke="#5e8f97"></path></svg></button>
              <button aria-label="扫描混合" class="flex h-7 w-7 items-center justify-center"><svg class="h-5 w-5" viewBox="0 0 20 20"><path d="M1 5l5-4l1 5l11 3v9H8V11L3 9z" fill="#c4e8e8" stroke="#4c6e70"></path><path d="M7 6L3 9l5 9M7 6l11 12" fill="none" stroke="#4c6e70"></path></svg></button>
              <button aria-label="边界混合" class="flex h-7 w-7 items-center justify-center"><svg class="h-5 w-5" viewBox="0 0 20 20"><path d="M1 15Q5 3 11 3l8 1q-6 4-7 14q-5-4-11-3zM4 9q6-1 11 2M7 15q1-8 8-12" fill="#b2eaea" stroke="#447578"></path></svg></button>
              <button aria-label="填充" class="flex h-7 w-7 items-center justify-center"><svg class="h-5 w-5" viewBox="0 0 20 20"><path d="M2.500 16V6q6-6 11-1l4 3v9q-8-4-15-1z" fill="#d9eeee" stroke="#587b7c"></path></svg></button>
              <button aria-label="合并" class="flex h-7 w-7 items-center justify-center"><svg class="h-5 w-5" viewBox="0 0 20 20"><path d="M2.500 2.500h15v15h-15z" fill="#e4eaed" stroke="#a4adb3"></path><path d="M17 6.500H6.500v7H17" fill="#d0d8dc" stroke="#b8c0c5"></path></svg></button>
              <button aria-label="延伸" class="flex h-7 w-7 items-center justify-center"><svg class="h-5 w-5" viewBox="0 0 20 20"><path d="M17 1.500H2.500v14H17" fill="#eef4f6" stroke="#10105c" stroke-width="1.500"></path><path d="M2 18.500h15" stroke="#333"></path><path d="M5.500 5.500h11v7h-11z" fill="#fbe9ec" stroke="#d8828d"></path><path d="M6 9h9M12 6l3.500 3l-3.500 3" fill="none" stroke="#bd2334" stroke-width="1.300"></path></svg></button>
              <button aria-label="修剪" class="flex h-7 w-7 items-center justify-center"><svg class="h-5 w-5" viewBox="0 0 20 20"><path d="M1 9q6-2 8 4q0 4-3 6q2-6-5-7zM10 11l8-10M9 9l11-3M11 12l6-3" fill="#ccd2d6" stroke="#8c969d" stroke-width="1.300"></path></svg></button>
              <button aria-label="样式" class="flex h-7 w-7 items-center justify-center"><svg class="h-5 w-5" viewBox="0 0 20 20"><path d="M4 4l3-3h11v5q-3 3 0 6l-3 6q-6 2-13-2l3-5q2-3-1-5z" fill="#8fc0e8" stroke="#234d87"></path><path d="M4 4h10l4-3M14 4v4q-3 3 0 6v4" fill="none" stroke="#234d87"></path><path d="M5 5h8v3H6z" fill="#d9ecfb"></path></svg></button>
              <div class="flex h-3.5 items-start pt-1"><span class="h-1 w-full border-y border-dotted border-[#7896b4]"></span></div>
              <button aria-label="造型" class="flex h-7 w-7 items-center justify-center"><svg class="h-5 w-5" viewBox="0 0 20 20"><path d="M2.500 15V6q4-6 12-4l1 8q-7-3-9 1z" fill="#f7ddfa" stroke="#c336ce" stroke-width="1.500"></path><path d="M1 17h17v3H1z" fill="#b01028"></path><path d="M9 7h10v10H9z" fill="#ecf052"></path><path d="M14 8l1.500 2.500l3 1.500l-3 1.500L14 16l-1.500-2.500l-3-1.500l3-1.500z" fill="#e5f03d" stroke="#3d5310"></path></svg></button>
              <div class="flex h-7 items-center">
                <button aria-label="阵列" class="flex h-7 w-7 items-center justify-center"><svg class="h-5 w-5" viewBox="0 0 20 20"><path d="M1 1.500h17.500v17M1 10h10v9" fill="none" stroke="#a7b1b8" stroke-dasharray="3 2"></path><path d="M10 11l6-6M12 4h5v5" fill="none" stroke="#555f67" stroke-width="1.200"></path></svg></button>
                <svg class="ml-1 h-1.5 w-1" viewBox="0 0 4 6"><path d="M0 0v6l4-3z" fill="#333"></path></svg>
              </div>
              <button aria-label="偏移" class="flex h-7 w-7 items-center justify-center"><svg class="h-5 w-5" viewBox="0 0 20 20"><path d="M3.500 16.500v-7l-2-3l3-1q3 5 7 2q3-2 7-2v3h-2v8z" fill="#e6ecef" stroke="#99a3aa"></path></svg></button>
              <button aria-label="加厚" class="flex h-7 w-7 items-center justify-center"><svg class="h-5 w-5" viewBox="0 0 20 20"><path d="M3.500 17.500v-9h-2M16.500 8.500v9h-13M2 6q4 5 8 3q4-4 8-1" fill="none" stroke="#bb2ac0" stroke-width="1.600"></path><path d="M10 8V1M7 4l3-3l3 3M10 17v-6M7 14l3-3l3 3" fill="none" stroke="#3ab4c3" stroke-width="1.200"></path></svg></button>
            </div>
          </div>
        </aside>
      </main>
    </div>
  </body>
</html>
